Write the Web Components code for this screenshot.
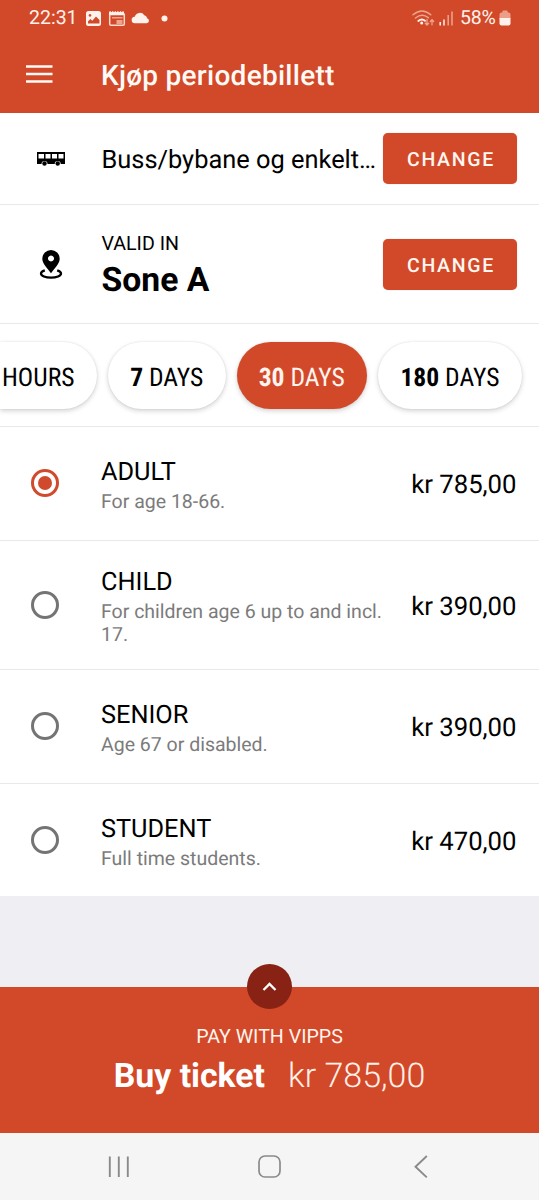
<!DOCTYPE html>
<html lang="no">
<head>
<meta charset="utf-8">
<title>Kjøp periodebillett</title>
<style>
html,body{margin:0;padding:0}
body{font-family:Roboto,"Liberation Sans",sans-serif;text-rendering:geometricPrecision;color:#000;background:#efeef3;width:539px;height:1200px;overflow:hidden;--brand:#d24929;--line:#e9e9e9}
</style>
</head>
<body>
<ticket-app></ticket-app>
<script>
const define = (name, html) => {
  const t = document.createElement('template');
  t.innerHTML = html;
  customElements.define(name, class extends HTMLElement {
    constructor() {
      super();
      this.attachShadow({ mode: 'open' }).append(t.content.cloneNode(true));
    }
  });
};

define('status-bar', `
<style>
:host{display:flex;align-items:center;height:35px;padding:0 28px 0 29px;color:#fff2ec;font-size:19.500px;line-height:22px;box-sizing:border-box}
svg{display:block;flex:none}
.t{width:56px}
.p{margin-left:auto}
.b{width:39px;margin-left:5px;letter-spacing:-.2px}
</style>
<span class="t">22:31</span>
<svg width="84" height="16" viewBox="85 9 84 16">
  <path fill="#fff2ec" fill-rule="evenodd" d="M88.500 10h10a2.500 2.500 0 0 1 2.500 2.500v10a2.500 2.500 0 0 1-2.500 2.500h-10a2.500 2.500 0 0 1-2.500-2.500v-10a2.500 2.500 0 0 1 2.500-2.500zM88 22.500h11.500v-3.500l-3.500-3.500-3.700 4.200-2-1.700-2.300 2.500zM90 13a1.400 1.400 0 1 0 .01 0z"/>
  <path fill="none" stroke="#ffd9cc" stroke-width="1.500" d="M109.700 12.500v10.500q0 1.200 1.200 1.200h12.200q1.200 0 1.200-1.200v-10.500"/>
  <path fill="#fff2ec" d="M109 11l1.200-1 1.200 1.200 1.300-1.200 1.300 1.200 1.300-1.200 1.300 1.200 1.300-1.200 1.300 1.200 1.300-1.200 1.300 1.200 1.200-1.200 1 1v3.200h-15z"/>
  <path fill="#efa48e" d="M112 16h10.500v1.500h-10.500zM116.500 19h6v4h-6z"/>
  <path fill="#fff2ec" d="M135 22.200a3.200 3.200 0 0 1-.3-6.400 5.300 5.300 0 0 1 9.600-1.500 3.600 3.600 0 0 1 2.800 3 2.500 2.500 0 0 1-.4 4.900z"/>
  <circle cx="164.500" cy="17.500" r="3" fill="#fff2ec"/>
</svg>
<svg class="p" width="44" height="18" viewBox="411 8 44 18">
  <g fill="none" stroke-width="1.500" stroke-linecap="round">
    <path stroke="#eda58f" d="M413 13.800q9-7.600 17.800 0M415.500 17q6.500-5.200 12.800-.3"/>
    <path stroke="#fff2ec" d="M418.300 20q3.500-3 6.700-.2" stroke-width="1.900"/>
    <path stroke="#eda58f" stroke-width="1.300" d="M427 18.500v5.300M425.300 22.200l1.700 1.800 1.700-1.800M432 23.800v-5M430.300 20.500l1.700-1.800 1.700 1.800"/>
  </g>
  <circle cx="421.700" cy="22" r="1.500" fill="#fff2ec"/>
  <path stroke="#fff2ec" stroke-width="1.500" d="M440.200 21v3.500M444 18.500v6"/>
  <path stroke="#eda58f" stroke-width="1.500" d="M448.200 14v10.500M452 10.500v14"/>
</svg>
<span class="b">58%</span>
<svg width="12" height="16" viewBox="0 0 12 16"><path fill="#eb9f88" d="M.5 9V4.500Q.5 2.500 2.500 2.500h.8V1.500Q3.300.5 4.500.5h3q1.200 0 1.200 1v1h.8q2 0 2 2V9z"/><path fill="#fff2ec" d="M.5 8h11v5.500q0 2-2 2h-7q-2 0-2-2z"/></svg>
`);

define('app-header', `
<style>
:host{display:block;height:113px;background:var(--brand);color:#fffaf5}
.bar{display:flex;align-items:center;height:78px;padding-left:26px}
svg{display:block;width:75px;flex:none;margin-top:-1px}
h1{margin:0;padding-top:4px;font-size:28px;line-height:32px;font-weight:500;letter-spacing:.27px}
</style>
<status-bar></status-bar>
<div class="bar">
  <svg width="75" height="20" viewBox="0 0 75 20"><path stroke="#fffaf5" stroke-width="2.600" d="M0 2.500h26.500M0 10h26.500M0 17.500h26.500"/></svg>
  <h1><slot></slot></h1>
</div>
`);

define('change-button', `
<style>
:host{display:block;flex:none;width:134px;height:51px;border-radius:5px;background:var(--brand);color:#fff7f0;font-size:19.500px;line-height:53px;font-weight:500;letter-spacing:1.700px;text-align:center;text-indent:2px;box-shadow:0 0 1px rgba(150,40,10,.4)}
</style><slot></slot>`);

define('info-row', `
<style>
:host{display:flex;align-items:center;background:#fff;border-bottom:1px solid var(--line);box-sizing:border-box;padding-right:22px}
.i{width:101.500px;flex:none}
.i ::slotted(svg){display:block}
.x{flex:1;min-width:0}
</style>
<div class="i"><slot name="icon"></slot></div><div class="x"><slot></slot></div><change-button>CHANGE</change-button>
`);

define('day-chip', `
<style>
:host{display:block;flex:none;box-sizing:border-box;width:var(--w);height:67px;border-radius:34px;background:#fff;font-size:25.600px;line-height:72px;font-stretch:75%;text-align:center;box-shadow:0 2px 5px rgba(0,0,0,.17),0 0 2px rgba(0,0,0,.1);white-space:nowrap}
:host([cut]){border-radius:0 34px 34px 0;text-align:left;padding-left:2px}
:host([on]){background:var(--brand);color:#fff4ee}
</style><slot></slot>`);

define('day-chips', `
<style>
:host{display:flex;gap:11px;align-items:flex-start;height:103px;box-sizing:border-box;padding-top:17.500px;background:#fff;border-bottom:1px solid var(--line);overflow:hidden}
</style><slot></slot>`);

define('fare-row', `
<style>
:host{display:flex;align-items:center;box-sizing:border-box;background:#fff;border-bottom:1px solid var(--line);padding-right:22.500px}
:host([last]){border-bottom:0}
.r{box-sizing:border-box;flex:none;width:28px;height:28px;border-radius:50%;border:3px solid #747474;margin:0 42px 0 31px;display:grid;place-items:center}
:host([checked]) .r{border-color:#d04b2d;margin-bottom:1px}
:host([checked]) .r::after{content:"";width:14px;height:14px;border-radius:50%;background:#d04b2d}
.x{width:292px;padding-top:5px}
.n{font-size:25.300px;line-height:30px;margin-bottom:2px}
.d{font-size:19.500px;line-height:23px;color:#7b7b7b}
.p{margin-left:auto;font-size:25.700px;line-height:30px;padding-top:4px;white-space:nowrap}
</style>
<span class="r"></span>
<div class="x"><div class="n"><slot name="name"></slot></div><div class="d"><slot></slot></div></div>
<div class="p"><slot name="price"></slot></div>
`);

define('buy-footer', `
<style>
:host{display:block;position:relative;height:146px;background:var(--brand);color:#fff4ee;text-align:center;box-sizing:border-box;padding-top:38px}
.fab{position:absolute;left:247px;top:-23px;width:45px;height:45px;border-radius:50%;background:#872214;display:grid;place-items:center}
.m{font-size:19.600px;line-height:23px}
.b{display:flex;justify-content:center;gap:23px;font-size:33.800px;line-height:40px;margin-top:9px;color:#fff}
b{font-weight:700}
.k{font-weight:300;font-size:34px;line-height:39px;color:#fff0e8}
</style>
<div class="fab"><svg width="15" height="10" viewBox="0 0 15 10"><path d="M1.500 8l6-6 6 6" fill="none" stroke="#fff" stroke-width="2.300"/></svg></div>
<div class="m">PAY WITH VIPPS</div>
<div class="b"><b>Buy ticket</b><span class="k">kr 785,00</span></div>
`);

define('nav-bar', `
<style>:host{display:grid;grid-template-columns:150px 156px 1fr;align-items:center;height:67px;background:#f5f5f5;padding-left:108px;box-sizing:border-box}svg{display:block}</style>
<svg width="22" height="23" viewBox="0 0 22 23"><path d="M1.800 1.500v20.500M10.800 1.500v20.500M19.800 1.500v20.500" stroke="#8a8a8a" stroke-width="1.900"/></svg>
<svg width="24" height="24" viewBox="0 0 24 24"><rect x="1" y="1" width="21" height="21" rx="6" fill="none" stroke="#8a8a8a" stroke-width="1.700"/></svg>
<svg width="15" height="24" viewBox="0 0 15 24"><path d="M12.800 1L1.500 11.700l11.300 10.700" fill="none" stroke="#8a8a8a" stroke-width="1.900"/></svg>
`);

define('ticket-app', `
<style>
:host{display:flex;flex-direction:column;width:539px;height:1200px}
.mode{font-size:25.400px;line-height:32px;white-space:nowrap;padding-top:2px}
.v{font-size:19.600px;line-height:23px;padding-top:4px}
.z{font-size:33.700px;line-height:40px;font-weight:700;margin-top:6px}
.s{flex:1}
</style>
<app-header>Kjøp periodebillett</app-header>
<info-row style="height:92px">
  <svg slot="icon" width="70" height="14" viewBox="0 0 70 14"><path fill="#000" fill-rule="evenodd" d="M37 0h28v12h-4.300a3 3 0 0 0-6 0h-7.200a3 3 0 0 0-6 0H37zM38.500 2v4.500h5.500v-4.500zM45.500 2v4.500h5v-4.500zM52 2v4.500h5v-4.500zM58.500 2v4.500h5v-4.500z"/><circle cx="44.500" cy="11.500" r="2.200"/><circle cx="57.700" cy="11.500" r="2.200"/></svg>
  <div class="mode">Buss/bybane og enkelt…</div>
</info-row>
<info-row style="height:119px">
  <svg slot="icon" width="70" height="30" viewBox="0 0 70 30"><path fill="#000" fill-rule="evenodd" d="M51 1a8.700 8.700 0 0 1 8.700 8.700c0 5-4.700 9-8.700 14.500-4-5.500-8.700-9.500-8.700-14.500A8.700 8.700 0 0 1 51 1zM51 6.500a3 3 0 1 0 .01 0z"/><path fill="none" stroke="#000" stroke-width="2.300" d="M44.800 21.300c-2.300.8-3.800 1.900-3.800 3.100 0 2.400 4.500 4.300 10 4.300s10-1.900 10-4.300c0-1.200-1.500-2.300-3.800-3.100"/></svg>
  <div class="v">VALID IN</div><div class="z">Sone A</div>
</info-row>
<day-chips>
  <day-chip cut style="--w:97px">HOURS</day-chip>
  <day-chip style="--w:117.500px"><b>7</b> DAYS</day-chip>
  <day-chip on style="--w:130.500px"><b>30</b> DAYS</day-chip>
  <day-chip style="--w:144px"><b>180</b> DAYS</day-chip>
</day-chips>
<fare-row checked style="height:113.500px"><span slot="name">ADULT</span>For age 18-66.<span slot="price">kr 785,00</span></fare-row>
<fare-row style="height:129.500px"><span slot="name">CHILD</span>For children age 6 up to and incl. 17.<span slot="price">kr 390,00</span></fare-row>
<fare-row style="height:113.500px"><span slot="name">SENIOR</span>Age 67 or disabled.<span slot="price">kr 390,00</span></fare-row>
<fare-row last style="height:112.500px"><span slot="name">STUDENT</span>Full time students.<span slot="price">kr 470,00</span></fare-row>
<div class="s"></div>
<buy-footer></buy-footer>
<nav-bar></nav-bar>
`);
</script>
</body>
</html>
